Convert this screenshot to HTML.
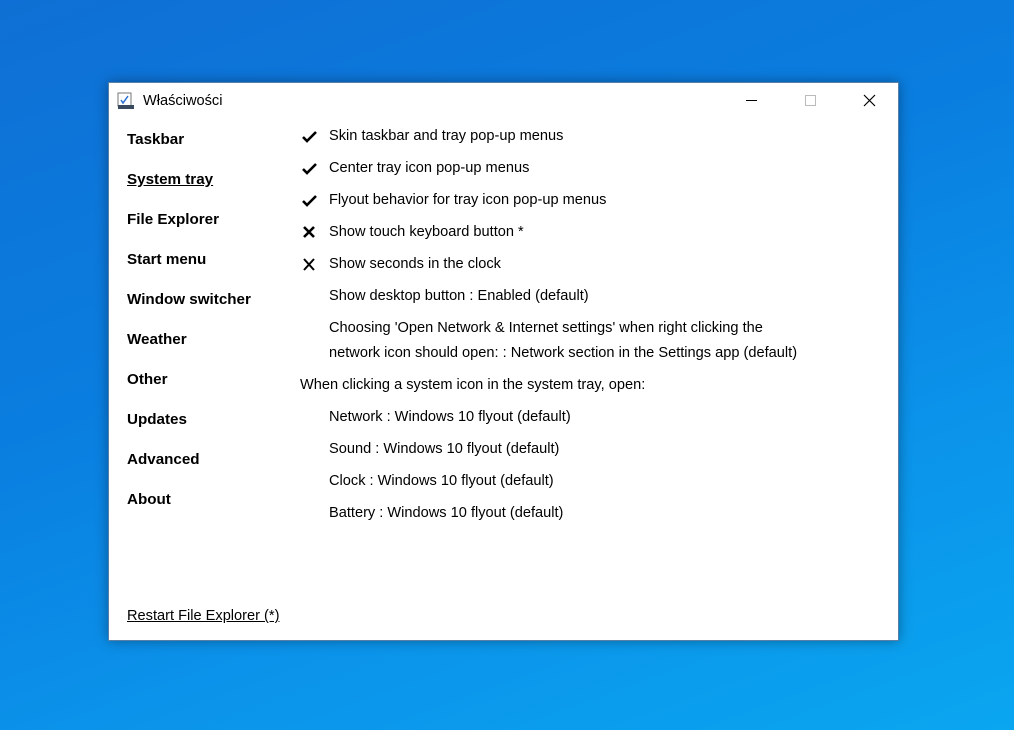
<!DOCTYPE html>
<html><head><meta charset="utf-8"><style>
*{margin:0;padding:0;box-sizing:border-box}
html,body{width:1014px;height:730px;overflow:hidden}
body{position:relative;font-family:"Liberation Sans",sans-serif;color:#000;
background:linear-gradient(160deg,#0f6fd4 0%,#0a7ee0 40%,#0b93ea 70%,#0aa6f0 100%);}
.win{position:absolute;left:108px;top:82px;width:791px;height:559px;background:#fff;border:1px solid #5a7fa6;box-shadow:0 0 12px rgba(0,0,0,.35)}
.t{position:absolute;white-space:nowrap;font-size:14.6px;line-height:18px}
.nav{position:absolute;left:18px;font-weight:bold;font-size:15.2px;line-height:18px;white-space:nowrap}
</style></head><body>
<div class="win">
<svg style="position:absolute;left:8px;top:9px" width="18" height="18" viewBox="0 0 18 18"><rect x="1" y="1" width="13" height="13" fill="#fff" stroke="#777"/><path d="M4 8l2 3 5-7" stroke="#2a6fd0" stroke-width="1.5" fill="none"/><rect x="1" y="13" width="16" height="4" fill="#3a4a5e"/></svg>
<div class="t" style="left:34px;top:9px">Właściwości</div>
<div style="position:absolute;left:637px;top:17px;width:11px;height:1px;background:#000"></div>
<div style="position:absolute;left:696px;top:12px;width:11px;height:11px;border:1px solid #bbb"></div>
<svg style="position:absolute;left:754px;top:11px" width="13" height="13"><path d="M1 1L12 12M12 1L1 12" stroke="#000" stroke-width="1.2"/></svg>
<div class="nav" style="top:48px">Taskbar</div>
<div class="nav" style="top:88px;text-decoration:underline">System tray</div>
<div class="nav" style="top:128px">File Explorer</div>
<div class="nav" style="top:168px">Start menu</div>
<div class="nav" style="top:208px">Window switcher</div>
<div class="nav" style="top:248px">Weather</div>
<div class="nav" style="top:288px">Other</div>
<div class="nav" style="top:328px">Updates</div>
<div class="nav" style="top:368px">Advanced</div>
<div class="nav" style="top:408px">About</div>
<div class="t" style="left:18px;top:524px;text-decoration:underline">Restart File Explorer (*)</div>
<svg style="position:absolute;left:193px;top:46px" width="16" height="110"><g stroke="#000" stroke-width="2.6" fill="none"><path d="M1 8l4 4 9-9"/><path d="M1 40l4 4 9-9"/><path d="M1 72l4 4 9-9"/><path d="M2 98l10 10M12 98L2 108"/></g></svg>
<svg style="position:absolute;left:193px;top:175px" width="16" height="14"><path d="M2 1l10 11M12 1L2 12" stroke="#000" stroke-width="2" fill="none"/></svg>
<div class="t" style="left:220px;top:44px">Skin taskbar and tray pop-up menus</div>
<div class="t" style="left:220px;top:76px">Center tray icon pop-up menus</div>
<div class="t" style="left:220px;top:108px">Flyout behavior for tray icon pop-up menus</div>
<div class="t" style="left:220px;top:140px">Show touch keyboard button *</div>
<div class="t" style="left:220px;top:172px">Show seconds in the clock</div>
<div class="t" style="left:220px;top:204px">Show desktop button : Enabled (default)</div>
<div class="t" style="left:220px;top:236px">Choosing 'Open Network &amp; Internet settings' when right clicking the</div>
<div class="t" style="left:220px;top:261px">network icon should open: : Network section in the Settings app (default)</div>
<div class="t" style="left:191px;top:293px">When clicking a system icon in the system tray, open:</div>
<div class="t" style="left:220px;top:325px">Network : Windows 10 flyout (default)</div>
<div class="t" style="left:220px;top:357px">Sound : Windows 10 flyout (default)</div>
<div class="t" style="left:220px;top:389px">Clock : Windows 10 flyout (default)</div>
<div class="t" style="left:220px;top:421px">Battery : Windows 10 flyout (default)</div>
</div>
</body></html>
